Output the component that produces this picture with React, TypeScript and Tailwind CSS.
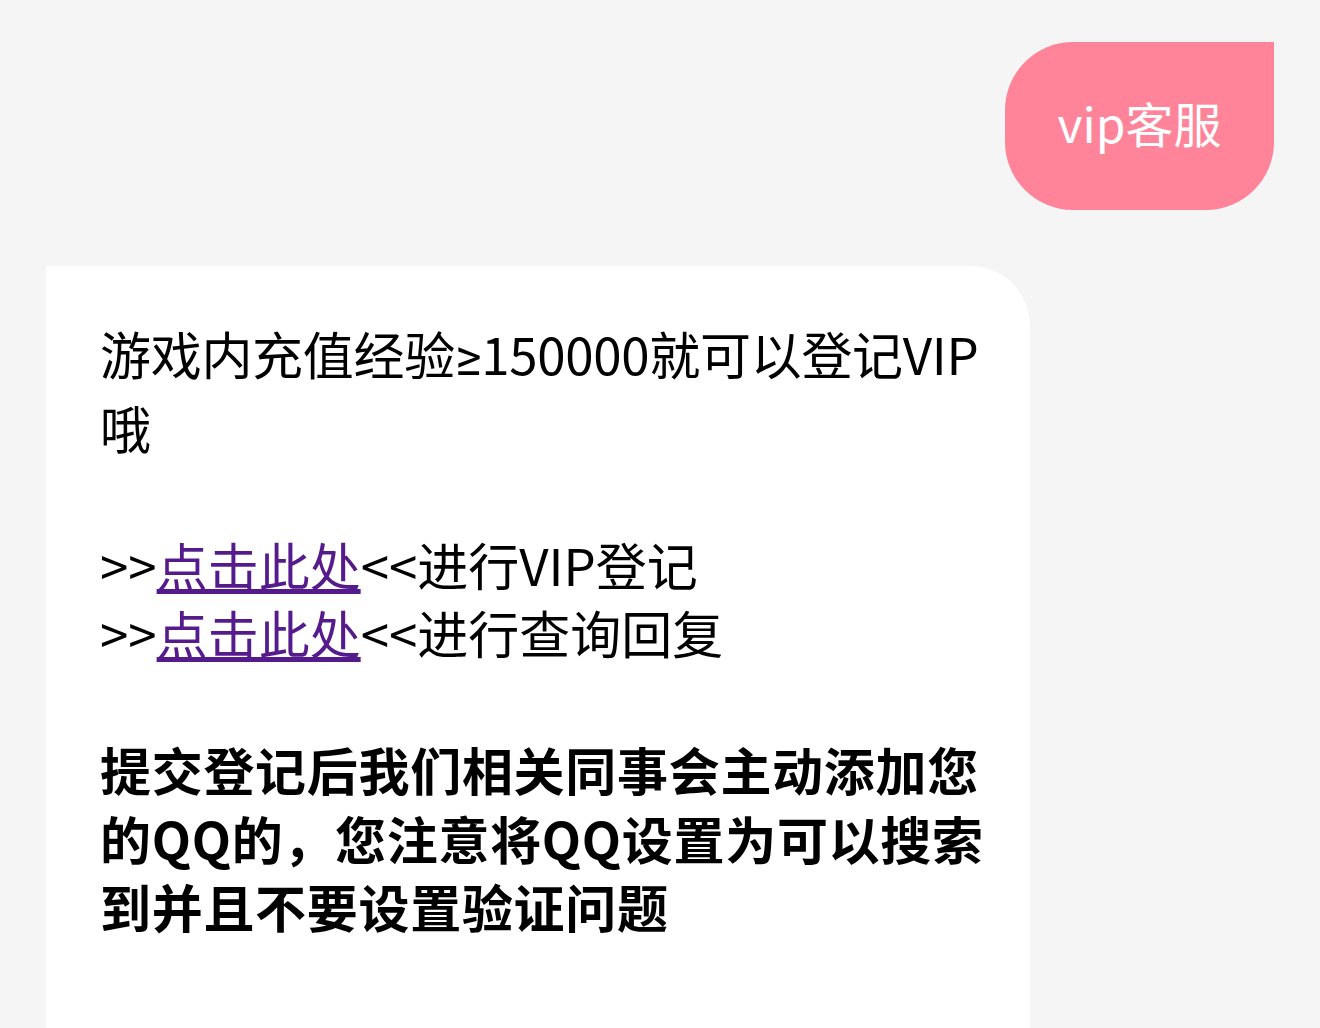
export default function App() {
  return (
    <div
      className="h-[1028px] overflow-hidden bg-[#f5f5f5] px-[46px] pt-[42px] text-black"
      style={{ fontFamily: '"Noto Sans CJK SC", "Noto Sans", sans-serif' }}
    >
      {/* outgoing bubble */}
      <div className="flex justify-end">
        <div className="flex h-[168px] w-[269px] items-center justify-center rounded-[68px] rounded-tr-none bg-[#ff849a] pb-2 text-[48px] leading-none text-white">
          vip客服
        </div>
      </div>

      {/* incoming message card */}
      <div className="mt-[56px] w-[984px] min-h-[900px] rounded-tr-[60px] bg-white px-[54px] pt-[53px] text-[51px] leading-[68.5px]">
        <p className="whitespace-nowrap tracking-[-0.3px]">
          游戏内充值经验<span className="font-['Roboto']">≥</span>150000就可以登记VIP
          <br />
          哦
        </p>
        <br />
        <p className="whitespace-nowrap">
          &gt;&gt;<a href="#" className="text-[#551a8b] underline underline-offset-[3px]">点击此处</a>&lt;&lt;进行VIP登记
          <br />
          &gt;&gt;<a href="#" className="text-[#551a8b] underline underline-offset-[3px]">点击此处</a>&lt;&lt;进行查询回复
        </p>
        <br />
        <p className="whitespace-nowrap font-bold tracking-[0.7px]">
          提交登记后我们相关同事会主动添加您
          <br />
          的QQ的，您注意将QQ设置为可以搜索
          <br />
          到并且不要设置验证问题
        </p>
      </div>
    </div>
  );
}
